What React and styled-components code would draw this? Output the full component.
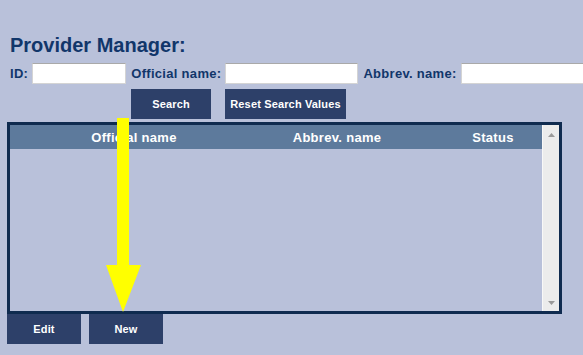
import React from "react";
import styled, { createGlobalStyle } from "styled-components";

const Global = createGlobalStyle`
  html, body {
    margin: 0;
    padding: 0;
    background: #b9c1da;
    font-family: "Liberation Sans", Arial, sans-serif;
    overflow: hidden;
  }
`;

const Page = styled.div`
  position: relative;
  width: 583px;
  height: 355px;
  overflow: hidden;
`;

const Title = styled.h1`
  margin: 0;
  padding: 33px 0 0 10px;
  font-size: 20px;
  line-height: 24px;
  font-weight: bold;
  color: #11366a;
  white-space: nowrap;
`;

const SearchRow = styled.div`
  display: flex;
  align-items: center;
  margin-top: 6px;
  padding-left: 10px;
  height: 21px;
  white-space: nowrap;
`;

const Label = styled.label`
  font-size: 13px;
  font-weight: bold;
  letter-spacing: 0.3px;
  color: #11366a;
  margin-right: 4px;
`;

const Field = styled.input`
  box-sizing: border-box;
  width: ${(p) => p.$w}px;
  height: 21px;
  flex: none;
  margin: 0 5px 0 0;
  padding: 0 3px;
  border: 1px solid #d4d4d4;
  border-top-color: #a9a9a9;
  background: #fff;
  outline: none;
`;

const ButtonRow = styled.div`
  display: flex;
  gap: ${(p) => p.$gap}px;
  padding-left: ${(p) => p.$left}px;
  margin-top: ${(p) => p.$top}px;
`;

const Button = styled.button`
  box-sizing: border-box;
  width: ${(p) => p.$w}px;
  height: 30px;
  padding: 0;
  border: none;
  background: #2d4069;
  color: #fff;
  font-family: "Liberation Sans", Arial, sans-serif;
  font-size: 11px;
  font-weight: bold;
  letter-spacing: 0.15px;
  cursor: pointer;
`;

const Table = styled.div`
  box-sizing: border-box;
  margin: 3px 0 0 7px;
  width: 555px;
  height: 192px;
  border: 3px solid #0f2b4f;
  display: flex;
`;

const Body = styled.div`
  flex: 1;
  display: flex;
  flex-direction: column;
`;

const Header = styled.div`
  display: grid;
  grid-template-columns: 248px 158px 1fr;
  height: 24px;
  align-items: center;
  background: #5d7a9c;
  color: #fff;
  font-size: 13px;
  font-weight: bold;
  letter-spacing: 0.3px;
`;

const HeadCell = styled.div`
  text-align: center;
  padding-left: ${(p) => p.$pad || 0}px;
`;

const Scrollbar = styled.div`
  width: 17px;
  background: #ececec;
  border-left: 1px solid #f8f8f8;
  display: flex;
  flex-direction: column;
  justify-content: space-between;
  align-items: center;
  padding: 8px 0 6px;
  box-sizing: border-box;
`;

const Arrow = styled.svg`
  position: absolute;
  left: 106px;
  top: 118px;
`;

const Tri = ({ up }) => (
  <svg width="7" height="4" viewBox="0 0 7 4">
    <path d={up ? "M0 4 L3.5 0 L7 4 Z" : "M0 0 L3.5 4 L7 0 Z"} fill="#9a9a9a" />
  </svg>
);

export default function App() {
  return (
    <Page>
      <Global />
      <Title>Provider Manager:</Title>
      <SearchRow>
        <Label>ID:</Label>
        <Field $w={94} />
        <Label>Official name:</Label>
        <Field $w={133} />
        <Label>Abbrev. name:</Label>
        <Field $w={140} />
      </SearchRow>
      <ButtonRow $left={131} $gap={14} $top={5}>
        <Button $w={80}>Search</Button>
        <Button $w={121}>Reset Search Values</Button>
      </ButtonRow>
      <Table>
        <Body>
          <Header>
            <HeadCell>Official name</HeadCell>
            <HeadCell>Abbrev. name</HeadCell>
            <HeadCell $pad={28}>Status</HeadCell>
          </Header>
        </Body>
        <Scrollbar>
          <Tri up />
          <Tri />
        </Scrollbar>
      </Table>
      <ButtonRow $left={7} $gap={8} $top={0}>
        <Button $w={74}>Edit</Button>
        <Button $w={74}>New</Button>
      </ButtonRow>
      <Arrow width="36" height="196" viewBox="0 0 36 196">
        <path d="M11 0 H23 V147 H35 L17 194 L0 147 H11 Z" fill="#ffff00" />
      </Arrow>
    </Page>
  );
}
